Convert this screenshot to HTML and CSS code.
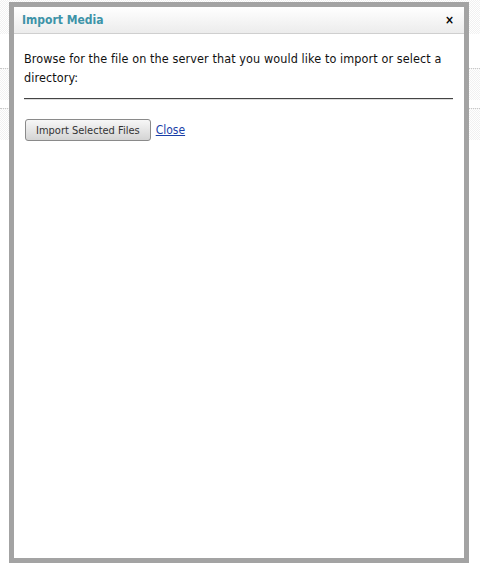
FILE: index.html
```html
<!DOCTYPE html>
<html lang="en">
<head>
    <meta charset="UTF-8">
    <title>Import Media</title>
    <link rel="stylesheet" href="styles.css">
</head>
<body>
<div class="backdrop">
    <div class="strip strip-top"></div>
    <div class="strip strip-gap"></div>
    <div class="strip strip-row"></div>
    <div class="strip strip-gap-small"></div>
    <div class="strip strip-row"></div>
</div>

<!-- 미디어 가져오기 대화상자 -->
<div class="dialog">
    <div class="dialog-header">
        <span class="dialog-title">Import Media</span>
        <span class="dialog-close">&times;</span>
    </div>
    <div class="dialog-body">
        <p class="dialog-text">Browse for the file on the server that you would like to import or select a directory:</p>
        <hr class="dialog-rule">
        <div class="dialog-actions">
            <button class="btn" type="button">Import Selected Files</button>
            <a class="link" href="#">Close</a>
        </div>
    </div>
</div>
</body>
</html>
```

FILE: styles.css
```css
* {
    margin: 0;
    padding: 0;
    box-sizing: border-box;
}

body {
    font-family: "DejaVu Sans Condensed", "DejaVu Sans", sans-serif;
    background: #fff;
    width: 480px;
    height: 571px;
    overflow: hidden;
    position: relative;
}

/* 뒤쪽 페이지 */
.backdrop {
    display: flex;
    flex-direction: column;
}

.strip-top {
    height: 34px;
    background: repeating-conic-gradient(#f1f1f1 0 25%, #fff 0 50%) 0 0 / 2px 2px;
}

.strip-gap {
    height: 34px;
}

.strip-gap-small {
    height: 8px;
}

.strip-row {
    height: 32px;
    border-top: 1px dotted #c8c8c8;
    background: repeating-conic-gradient(#f1f1f1 0 25%, #fff 0 50%) 0 0 / 2px 2px;
}

/* 대화상자 */
.dialog {
    position: absolute;
    left: 9px;
    top: 2px;
    width: 460px;
    height: 561px;
    border: 5px solid #a3a3a3;
    background: #fff;
}

.dialog-header {
    height: 27px;
    display: flex;
    align-items: center;
    justify-content: space-between;
    padding: 0 10px 0 8px;
    background: linear-gradient(#fff, #ececec);
    border-bottom: 1px solid #cfcfcf;
}

.dialog-title {
    font-size: 12px;
    font-weight: bold;
    color: #3d93a8;
}

.dialog-close {
    font-size: 12px;
    font-weight: bold;
    color: #000;
}

.dialog-body {
    padding: 15px 11px 0 10px;
}

.dialog-text {
    font-size: 12.5px;
    line-height: 19px;
    color: #111;
    letter-spacing: 0.1px;
}

.dialog-rule {
    margin-top: 11px;
    border: 0;
    border-top: 1px solid #444;
    border-bottom: 1px solid #ddd;
}

.dialog-actions {
    margin-top: 19px;
    display: flex;
    align-items: center;
    gap: 5px;
}

.btn {
    margin-left: 1px;
    height: 22px;
    padding: 0 10px;
    font-family: inherit;
    font-size: 11px;
    color: #333;
    background: linear-gradient(#f7f7f7, #d4d4d4);
    border: 1px solid #8a8a8a;
    border-radius: 3px;
}

.link {
    font-size: 12px;
    color: #1a3fa8;
}
```
